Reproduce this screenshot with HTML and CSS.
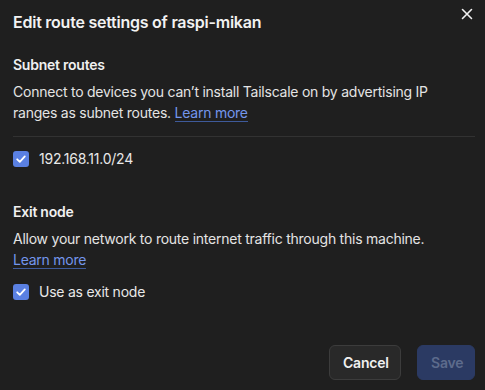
FILE: index.html
```html
<!DOCTYPE html>
<html lang="en">
<head>
    <meta charset="UTF-8">
    <meta name="viewport" content="width=device-width, initial-scale=1.0">
    <title>Edit route settings</title>
    <link rel="stylesheet" href="styles.css">
</head>
<body>
    <div class="dialog">
        <div class="header">
            <h1>Edit route settings of raspi-mikan</h1>
            <button class="close" aria-label="Close">
                <svg width="12" height="12" viewBox="0 0 12 12"><path d="M1.5 1.5 L10.5 10.5 M10.5 1.5 L1.5 10.5" stroke="#f0f0f0" stroke-width="1.6" stroke-linecap="round"/></svg>
            </button>
        </div>

        <div class="section subnet">
            <h2>Subnet routes</h2>
            <p>Connect to devices you can’t install Tailscale on by advertising IP ranges as subnet routes. <a href="#">Learn more</a></p>
            <hr class="divider">
            <label class="check-row">
                <span class="box"><svg width="16" height="16" viewBox="0 0 16 16"><path d="M4.2 8.3 L6.8 10.8 L11.8 5.4" fill="none" stroke="#fff" stroke-width="1.8" stroke-linecap="round" stroke-linejoin="round"/></svg></span>
                192.168.11.0/24
            </label>
        </div>

        <div class="section exit">
            <h2>Exit node</h2>
            <p>Allow your network to route internet traffic through this machine. <a href="#">Learn more</a></p>
            <label class="check-row">
                <span class="box"><svg width="16" height="16" viewBox="0 0 16 16"><path d="M4.2 8.3 L6.8 10.8 L11.8 5.4" fill="none" stroke="#fff" stroke-width="1.8" stroke-linecap="round" stroke-linejoin="round"/></svg></span>
                Use as exit node
            </label>
        </div>

        <div class="footer">
            <button class="btn cancel">Cancel</button>
            <button class="btn save" disabled>Save</button>
        </div>
    </div>
</body>
</html>
```

FILE: styles.css
```css
html, body {
    height: 100%;
}
body {
    font-family: Inter, "Noto Sans", sans-serif;
    background-color: #1f1f1f;
    color: #e4e4e4;
    margin: 0;
    padding: 0;
    letter-spacing: -0.015em;
}
.dialog {
    height: 100%;
    box-sizing: border-box;
    padding: 10px 10px 10px 13px;
    display: flex;
    flex-direction: column;
}
.header {
    display: flex;
    justify-content: space-between;
    align-items: flex-start;
}
.header h1 {
    margin: 0;
    font-size: 16px;
    line-height: 24px;
    font-weight: 600;
    color: #f2f2f2;
}
.close {
    background: none;
    border: none;
    padding: 0;
    margin: -3px 1px 0 0;
    width: 14px;
    height: 14px;
    display: flex;
    align-items: center;
    justify-content: center;
}
.section h2 {
    margin: 0;
    font-size: 14px;
    line-height: 20px;
    font-weight: 600;
    color: #f0f0f0;
}
.section p {
    margin: 6px 0 0;
    font-size: 14px;
    line-height: 21px;
}
.subnet {
    margin-top: 21px;
}
.exit {
    margin-top: 35px;
}
.section a {
    color: #7496ec;
    text-decoration: none;
    border-bottom: 1px solid #3e5a9a;
    white-space: nowrap;
}
.divider {
    border: none;
    border-top: 1px solid #323232;
    margin: 13px 0 14px;
}
.check-row {
    display: flex;
    align-items: center;
    gap: 10px;
    font-size: 14px;
    line-height: 16px;
    color: #e8e8e8;
}
.exit .check-row {
    margin-top: 14px;
}
.box {
    width: 16px;
    height: 16px;
    border-radius: 3px;
    background-color: #5a80e2;
    display: flex;
}
.footer {
    margin-top: auto;
    display: flex;
    justify-content: flex-end;
    gap: 16px;
}
.btn {
    font-family: Inter, "Noto Sans", sans-serif;
    font-size: 14px;
    font-weight: 600;
    letter-spacing: -0.015em;
    height: 35px;
    border-radius: 6px;
    padding: 0 13px;
}
.cancel {
    background-color: #292929;
    color: #f0f0f0;
    border: 1px solid #3c3c3c;
    width: 72px;
}
.save {
    background-color: #2b3a63;
    color: #5d6b8c;
    border: 1px solid #2b3a63;
    width: 58px;
}
```
